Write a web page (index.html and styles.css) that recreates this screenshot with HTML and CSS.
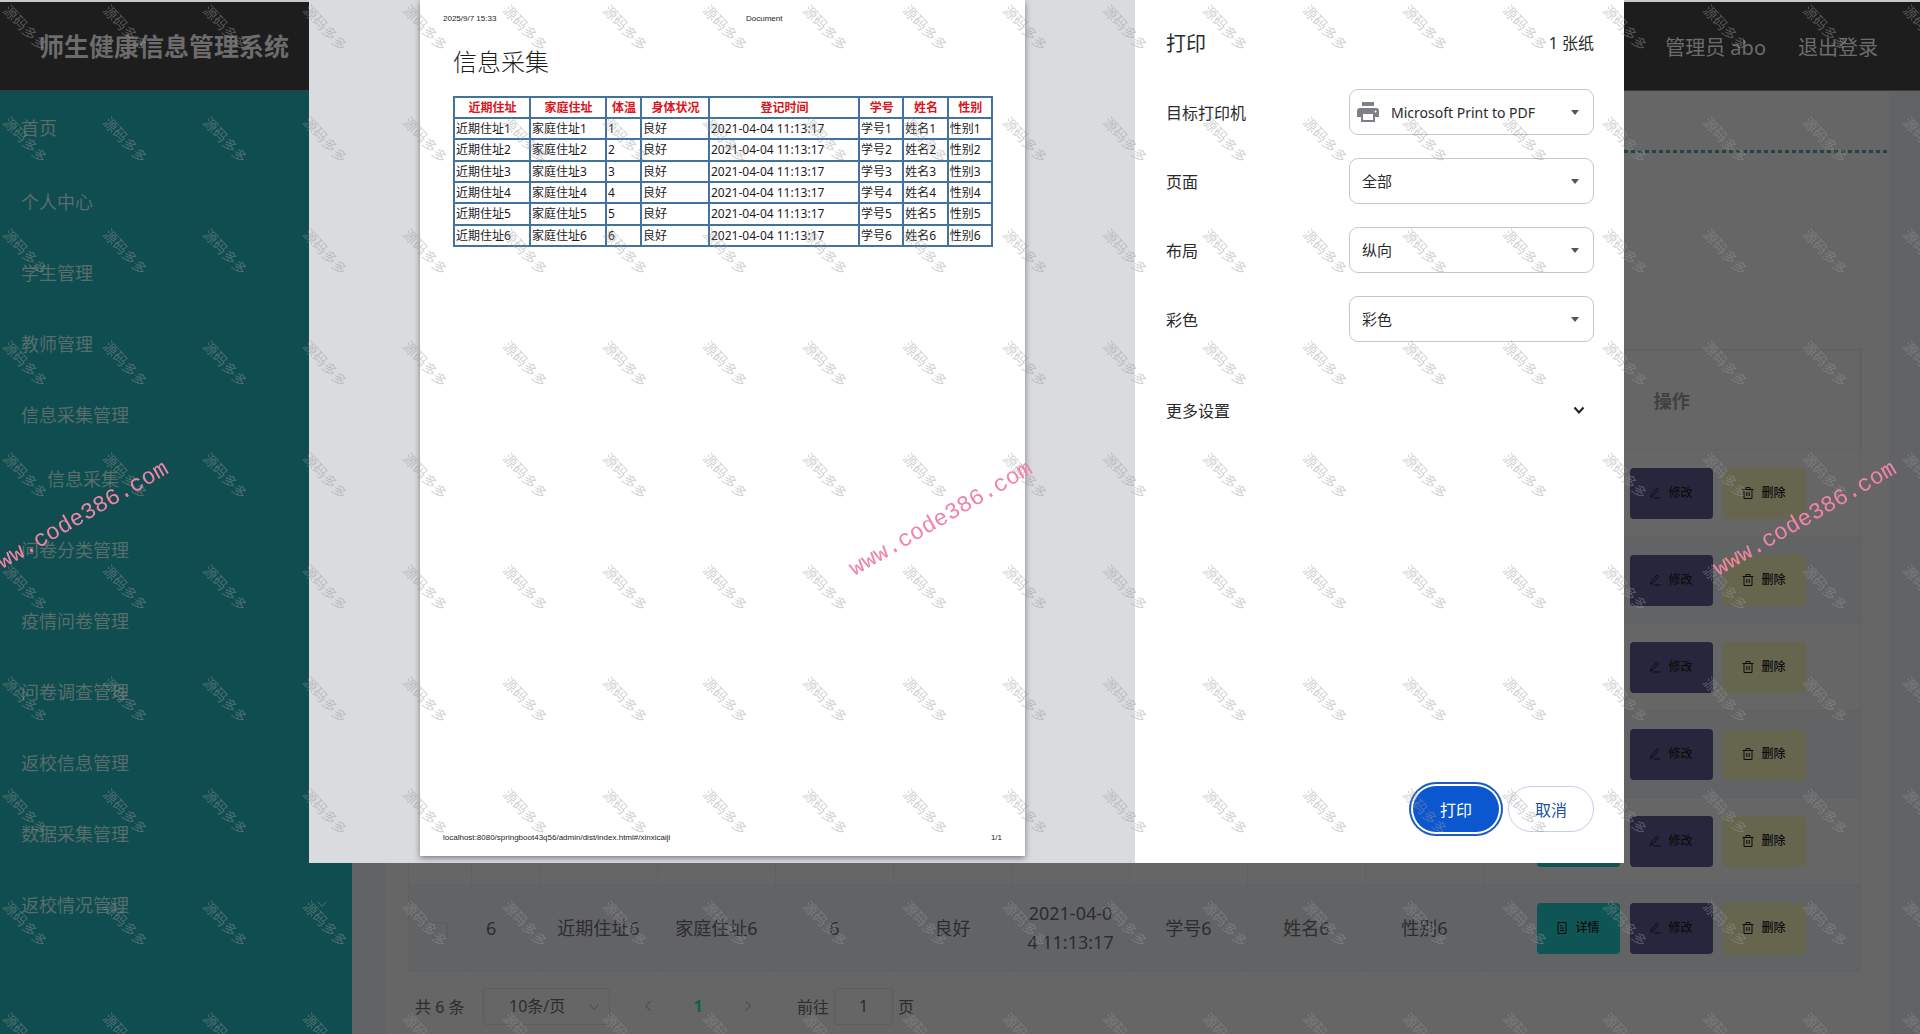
FILE: index.html
```html
<!DOCTYPE html>
<html lang="zh-CN">
<head>
<meta charset="utf-8">
<title>师生健康信息管理系统</title>
<link rel="stylesheet" href="styles.css">
</head>
<body>
<svg class="sprite" aria-hidden="true">
  <symbol id="i-down" viewBox="0 0 12 12"><path d="M1.5 3.5 6 8.5l4.500-5" fill="none" stroke="currentColor"/></symbol>
  <symbol id="i-left" viewBox="0 0 12 12"><path d="M8.500 1 3.500 6l5 5" fill="none" stroke="currentColor"/></symbol>
  <symbol id="i-right" viewBox="0 0 12 12"><path d="M3.500 1l5 5-5 5" fill="none" stroke="currentColor"/></symbol>
  <symbol id="i-caret" viewBox="0 0 8 5"><path d="M0 0h8L4 5z" fill="currentColor"/></symbol>
  <symbol id="i-doc" viewBox="0 0 12 12"><path d="M2 .5h8v11H2zM4 3.500h2M4 6h4M4 8.500h4" fill="none" stroke="currentColor"/></symbol>
  <symbol id="i-edit" viewBox="0 0 12 12"><path d="M1.500 10.500 2.500 7 7.500 1.500q1.500-.8 2 .8L4.500 8.500zM4.500 11h7" fill="none" stroke="currentColor"/></symbol>
  <symbol id="i-del" viewBox="0 0 12 12"><path d="M.5 2.500h11M4 2.500v-2h4v2M2 2.500v9h8v-9M4.800 5v4M7.200 5v4" fill="none" stroke="currentColor"/></symbol>
  <symbol id="i-print" viewBox="0 0 22 20"><path d="M5 0h12v4H5zM3 6h16q3 0 3 3v6h-4v5H4v-5H0V9q0-3 3-3zm3 6v6h10v-6zm12.500-3.500a1 1 0 1 0 .1 0z" fill="currentColor" fill-rule="evenodd"/></symbol>
</svg>

<header class="topbar">
  <h1 class="brand">师生健康信息管理系统</h1>
  <nav class="account"><a href="#user">管理员 abo</a><a href="#logout">退出登录</a></nav>
</header>

<div class="shell">
  <nav class="sidebar">
    <a class="item home" href="#home">首页</a>
    <a class="item" href="#me">个人中心<svg class="chev"><use href="#i-down"/></svg></a>
    <a class="item" href="#student">学生管理<svg class="chev"><use href="#i-down"/></svg></a>
    <a class="item" href="#teacher">教师管理<svg class="chev"><use href="#i-down"/></svg></a>
    <a class="item" href="#collect">信息采集管理<svg class="chev"><use href="#i-down"/></svg></a>
    <a class="item sub" href="#collect-list">信息采集</a>
    <a class="item" href="#category">问卷分类管理<svg class="chev"><use href="#i-down"/></svg></a>
    <a class="item" href="#epidemic">疫情问卷管理<svg class="chev"><use href="#i-down"/></svg></a>
    <a class="item" href="#survey">问卷调查管理<svg class="chev"><use href="#i-down"/></svg></a>
    <a class="item" href="#return">返校信息管理<svg class="chev"><use href="#i-down"/></svg></a>
    <a class="item" href="#data">数据采集管理<svg class="chev"><use href="#i-down"/></svg></a>
    <a class="item" href="#status">返校情况管理<svg class="chev"><use href="#i-down"/></svg></a>
  </nav>

  <main class="card">
    <div class="crumbs"></div>
    <table class="list">
      <colgroup><col class="c-check"><col class="c-index"><col span="8" class="c-data"><col></colgroup>
      <thead><tr><th></th><th>索引</th><th>近期住址</th><th>家庭住址</th><th>体温</th><th>身体状况</th><th>登记时间</th><th>学号</th><th>姓名</th><th>性别</th><th>操作</th></tr></thead>
      <tbody id="rows"></tbody>
    </table>
    <div class="pager">
      <span class="total">共 6 条</span>
      <span class="pick"><select aria-label="每页条数"><option>10条/页</option></select><svg class="chev"><use href="#i-down"/></svg></span>
      <button class="step" aria-label="上一页"><svg class="chev"><use href="#i-left"/></svg></button>
      <button class="step current">1</button>
      <button class="step" aria-label="下一页"><svg class="chev"><use href="#i-right"/></svg></button>
      <label class="jump">前往<input type="text" value="1">页</label>
    </div>
  </main>
</div>

<section class="dialog" role="dialog" aria-label="打印">
  <div class="preview">
    <article class="sheet">
      <div class="running"><span>2025/9/7 15:33</span><span>Document</span></div>
      <h2 class="sheet-title">信息采集</h2>
      <table class="print">
        <colgroup><col class="p-addr"><col class="p-addr"><col class="p-temp"><col class="p-state"><col class="p-time"><col span="3" class="p-short"></colgroup>
        <thead><tr><th>近期住址</th><th>家庭住址</th><th>体温</th><th>身体状况</th><th>登记时间</th><th>学号</th><th>姓名</th><th>性别</th></tr></thead>
        <tbody id="print-rows"></tbody>
      </table>
      <div class="running foot"><span>localhost:8080/springboot43q56/admin/dist/index.html#/xinxicaiji</span><span>1/1</span></div>
    </article>
  </div>
  <form class="settings">
    <div class="head"><h2>打印</h2><span>1 张纸</span></div>
    <div class="field"><label for="dest">目标打印机</label><span class="box with-icon"><svg class="printer"><use href="#i-print"/></svg><select id="dest"><option>Microsoft Print to PDF</option></select><svg class="caret"><use href="#i-caret"/></svg></span></div>
    <div class="field"><label for="pages">页面</label><span class="box"><select id="pages"><option>全部</option></select><svg class="caret"><use href="#i-caret"/></svg></span></div>
    <div class="field"><label for="layout">布局</label><span class="box"><select id="layout"><option>纵向</option></select><svg class="caret"><use href="#i-caret"/></svg></span></div>
    <div class="field"><label for="color">彩色</label><span class="box"><select id="color"><option>彩色</option></select><svg class="caret"><use href="#i-caret"/></svg></span></div>
    <button type="button" class="more">更多设置<svg class="chev"><use href="#i-down"/></svg></button>
    <div class="actions"><button type="button" class="primary">打印</button><button type="button" class="cancel">取消</button></div>
  </form>
</section>

<div class="marks" id="marks" aria-hidden="true"></div>
<div class="sites" aria-hidden="true"><span class="site first">www.code386.com</span><span class="site second">www.code386.com</span><span class="site third">www.code386.com</span></div>
<script src="app.js"></script>
</body>
</html>
```
FILE: styles.css
```css
* { box-sizing: border-box; }
body {
  margin: 0;
  height: 100vh;
  overflow: hidden;
  display: flex;
  flex-direction: column;
  border-top: 2px solid #c6cac6;
  background: #626366;
  color: #2c2d2e;
  font-family: "Noto Sans", "Noto Sans CJK SC", sans-serif;
  font-size: 18px;
}
h1, h2 { margin: 0; }
a { color: inherit; text-decoration: none; }
button, select, input { font: inherit; color: inherit; background: none; border: 0; padding: 0; margin: 0; }
select { appearance: none; outline: 0; }
.sprite { display: none; }
.chev { width: 12px; height: 12px; flex: none; }

.topbar {
  flex: none;
  height: 89px;
  padding: 0 42px 0 39px;
  display: flex;
  align-items: center;
  justify-content: space-between;
  background: #1d1d1d;
  border-bottom: 1px solid #3a3a3a;
  color: #6c6c6c;
}
.brand { font-size: 25px; line-height: 36px; font-weight: 700; }
.account { display: flex; gap: 32px; font-size: 20px; }

.shell { flex: 1; display: flex; align-items: stretch; }
.sidebar { width: 352px; flex: none; background: #104d50; color: #576e6d; }
.item { height: 71px; padding: 0 24px 0 21px; display: flex; align-items: center; justify-content: space-between; }
.home { height: 71px; margin-bottom: 3px; }
.sub { height: 58px; padding-left: 47px; margin-bottom: 6px; }

.card { flex: 1; margin: 0 31px 0 33px; background: #656665; }
.crumbs { height: 62px; position: relative; }
.crumbs::after {
  content: "";
  position: absolute;
  left: 0; right: 0; bottom: 0;
  height: 3px;
  background: repeating-linear-gradient(90deg, #1f4646 0 4px, transparent 4px 7px);
}
.list {
  width: calc(100% - 51px);
  margin: 196px 28px 0 23px;
  table-layout: fixed;
  border-collapse: collapse;
  border: 1px solid #5d5e5e;
  text-align: center;
}
.c-check { width: 63px; }
.c-index { width: 68px; }
.c-data { width: 118px; }
.list th { height: 100px; padding: 0; font-weight: 700; color: #404141; border-bottom: 1px solid #606161; }
.list td { height: 87px; padding: 0 14px; line-height: 29px; word-break: break-all; border: 1px solid #606162; }
.list tr:nth-child(even) td { background: #626365; }
.list td:nth-child(2) { text-align: left; }
.list td:last-child { padding: 0 2px 0 0; }
.list input { appearance: none; width: 16px; height: 16px; border: 1px solid #5a5b5b; border-radius: 2px; vertical-align: middle; }
.ops { display: flex; justify-content: center; gap: 10px; }
.op { width: 83px; height: 51px; border-radius: 4px; display: flex; align-items: center; justify-content: center; gap: 7px; font-size: 12px; line-height: 18px; font-weight: 500; color: #0c0d0d; }
.op svg { width: 12px; height: 12px; }
.detail { background: #0f5555; }
.edit { background: #27263d; }
.del { background: #66664f; }

.pager { display: flex; align-items: center; height: 38px; margin: 15px 0 0 30px; font-size: 16px; }
.total { width: 68px; }
.pick { position: relative; width: 127px; height: 37px; border: 1px solid #5d5e5e; border-radius: 3px; }
.pick select { width: 100%; height: 100%; padding-left: 25px; }
.pick .chev { position: absolute; right: 9px; top: 12px; color: #484949; }
.step { width: 50px; display: flex; justify-content: center; color: #434444; }
.pick + .step { margin-left: 13px; }
.step.current { color: #0f6149; font-weight: 700; }
.jump { display: flex; align-items: center; gap: 5px; margin-left: 24px; }
.jump input { width: 59px; height: 37px; border: 1px solid #5d5e5e; border-radius: 3px; text-align: center; }

.dialog { position: absolute; top: 0; left: 309px; right: 296px; height: 863px; display: flex; background: #fff; }
.preview { flex: 1; padding: 0 110px 7px 111px; display: flex; background: #dadbdf; }
.sheet {
  flex: 1;
  display: flex;
  flex-direction: column;
  padding: 14px 23px 13px;
  background: #fff;
  color: #1c1c1c;
  box-shadow: 0 2px 6px #77797e;
}
.running { display: grid; grid-template-columns: 303px 1fr; font: 8px/10px "Liberation Sans", sans-serif; }
.foot { display: flex; justify-content: space-between; margin-top: auto; }
.sheet-title { margin: 20px 10px 16px; font-size: 24px; line-height: 36px; font-weight: 300; }
.print { width: calc(100% - 19px); height: 151px; margin-left: 10px; table-layout: fixed; border-collapse: collapse; font-size: 12px; line-height: 19px; }
.p-addr { width: 76px; }
.p-temp { width: 35px; }
.p-state { width: 68px; }
.p-time { width: 150px; }
.print th, .print td { border: 2px solid #4273a0; padding: 0 0 0 1px; white-space: nowrap; text-align: left; }
.print th { color: #dc1420; text-align: center; font-weight: 700; }

.settings { width: 489px; flex: none; padding: 25px 30px 25px 31px; display: flex; flex-direction: column; color: #2a2a2c; font-size: 16px; }
.head { display: flex; align-items: center; justify-content: space-between; height: 34px; margin-bottom: 30px; }
.head h2 { font-size: 20px; font-weight: 400; }
.field { display: flex; align-items: center; justify-content: space-between; margin-bottom: 23px; }
.box { position: relative; width: 245px; height: 46px; border: 1px solid #c6c7ca; border-radius: 9px; display: flex; align-items: center; }
.box select { width: 100%; height: 100%; padding-left: 12px; font-size: 15px; }
.with-icon select { padding-left: 41px; font-size: 14px; }
.caret { position: absolute; right: 14px; top: 20px; width: 8px; height: 5px; color: #555; pointer-events: none; }
.printer { position: absolute; left: 7px; top: 12px; width: 22px; height: 20px; color: #7d8085; pointer-events: none; }
.more { margin-top: 32px; height: 26px; padding-right: 9px; display: flex; align-items: center; justify-content: space-between; }
.more .chev { stroke-width: 2; color: #1f1f1f; }
.actions { margin-top: auto; display: flex; align-items: center; justify-content: flex-end; gap: 9px; padding-bottom: 6px; }
.actions button { width: 86px; height: 46px; border-radius: 23px; }
.primary { background: #0b57d0; color: #fff; box-shadow: 0 0 0 2px #fff, 0 0 0 4px #1d5cc0; }
.cancel { border: 1px solid #c3cfe8; color: #1c4f9f; }

.marks {
  position: fixed;
  inset: 0;
  overflow: hidden;
  pointer-events: none;
  display: grid;
  grid-auto-rows: 112px;
}
.mark { width: 50px; height: 55px; display: flex; align-items: center; justify-content: center; }
.mark span { flex: none; font-size: 14px; line-height: 16px; white-space: nowrap; transform: rotate(47deg); color: rgba(150, 152, 152, .46); }
.sites { position: fixed; inset: 0; overflow: hidden; pointer-events: none; }
.site { position: absolute; top: 519px; font: 23px/28px "Liberation Mono", monospace; color: #f283a9; transform: translate(-50%, -50%) rotate(-30deg); }
.first { left: 4%; }
.second { left: 49%; }
.third { left: 94%; }
```
FILE: app.js
```js
const icon = name => `<svg aria-hidden="true"><use href="#i-${name}"/></svg>`;
const time = '2021-04-04 11:13:17';
let list = '';
let print = '';
for (let n = 1; n <= 6; n++) {
  list += `<tr><td><input type="checkbox" aria-label="选择第${n}行"></td><td>${n}</td><td>近期住址${n}</td><td>家庭住址${n}</td><td>${n}</td><td>良好</td><td>${time}</td><td>学号${n}</td><td>姓名${n}</td><td>性别${n}</td>
    <td><div class="ops"><button class="op detail">${icon('doc')}详情</button><button class="op edit">${icon('edit')}修改</button><button class="op del">${icon('del')}删除</button></div></td></tr>`;
  print += `<tr><td>近期住址${n}</td><td>家庭住址${n}</td><td>${n}</td><td>良好</td><td>${time}</td><td>学号${n}</td><td>姓名${n}</td><td>性别${n}</td></tr>`;
}
document.getElementById('rows').innerHTML = list;
document.getElementById('print-rows').innerHTML = print;

// One mark per 100 x 112 tile, enough tiles to cover the window.
const columns = Math.ceil(innerWidth / 100);
const lines = Math.ceil(innerHeight / 112);
const marks = document.getElementById('marks');
marks.style.gridTemplateColumns = `repeat(${columns}, 100px)`;
marks.innerHTML = '<div class="mark"><span>源码多多</span></div>'.repeat(columns * lines);
```
